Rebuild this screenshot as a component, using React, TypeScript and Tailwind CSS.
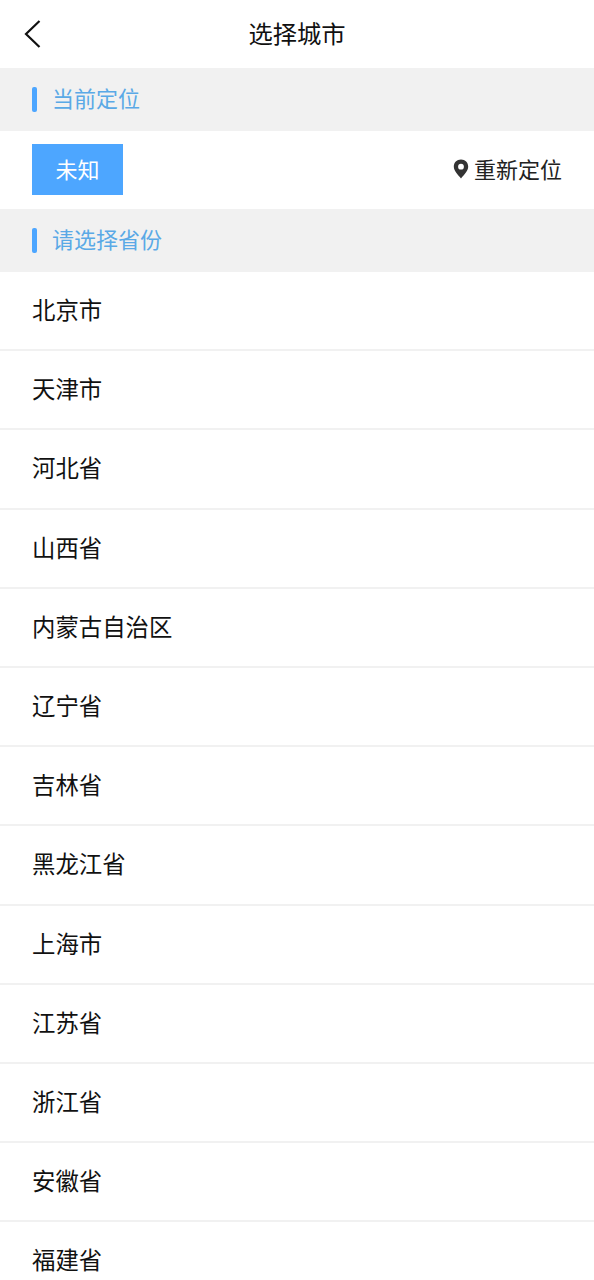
import React from "react";

const provinces = [
  "北京市",
  "天津市",
  "河北省",
  "山西省",
  "内蒙古自治区",
  "辽宁省",
  "吉林省",
  "黑龙江省",
  "上海市",
  "江苏省",
  "浙江省",
  "安徽省",
  "福建省",
];

function SectionTitle({ title }: { title: string }) {
  return (
    <div className="flex h-[63px] items-center bg-[#f1f1f1] pl-8">
      <span className="h-[25px] w-[5px] rounded-[2px] bg-[#4da6ff]" />
      <span className="mb-[6px] ml-[15px] text-[22px] leading-none text-[#5aa9e6]">{title}</span>
    </div>
  );
}

export default function App() {
  return (
    <div
      className="h-[1280px] w-full overflow-hidden bg-white"
      style={{ fontFamily: '"Noto Sans CJK SC", "Liberation Sans", sans-serif' }}
    >
      {/* 顶部 */}
      <div className="relative flex h-[68px] items-center justify-center pb-[2px]">
        <svg className="absolute left-[24px] top-[19px]" width="18" height="30" viewBox="0 0 18 30" fill="none">
          <path d="M15.5 2 L2 15 L15.5 28" stroke="#111" strokeWidth="2.2" />
        </svg>
        <span className="text-[24.3px] leading-none text-[#111]">选择城市</span>
      </div>

      <SectionTitle title="当前定位" />

      <div className="flex h-[78px] items-center justify-between px-8 pb-[2px]">
        <div className="flex h-[51px] w-[91px] items-center justify-center bg-[#4da6ff] pb-[2px] text-[22px] text-white">
          未知
        </div>
        <div className="flex items-center">
          <svg width="16" height="20" viewBox="0 0 16 20">
            <path
              fillRule="evenodd"
              d="M8 0.5C3.8 0.5 0.8 3.6 0.8 7.6C0.8 12 5 16.2 8 19.5C11 16.2 15.2 12 15.2 7.6C15.2 3.6 12.2 0.5 8 0.5ZM8 4.8A2.9 2.9 0 1 1 8 10.6A2.9 2.9 0 1 1 8 4.8Z"
              fill="#333"
            />
          </svg>
          <span className="mb-[3px] ml-[5px] text-[22px] leading-none text-[#222]">重新定位</span>
        </div>
      </div>

      <SectionTitle title="请选择省份" />

      <div>
        {provinces.map((name) => (
          <div
            key={name}
            className="flex h-[79.2px] items-center border-b-2 border-[#f1f1f1] pb-[2px] pl-8 text-[23.4px] text-[#111]"
          >
            {name}
          </div>
        ))}
      </div>
    </div>
  );
}
